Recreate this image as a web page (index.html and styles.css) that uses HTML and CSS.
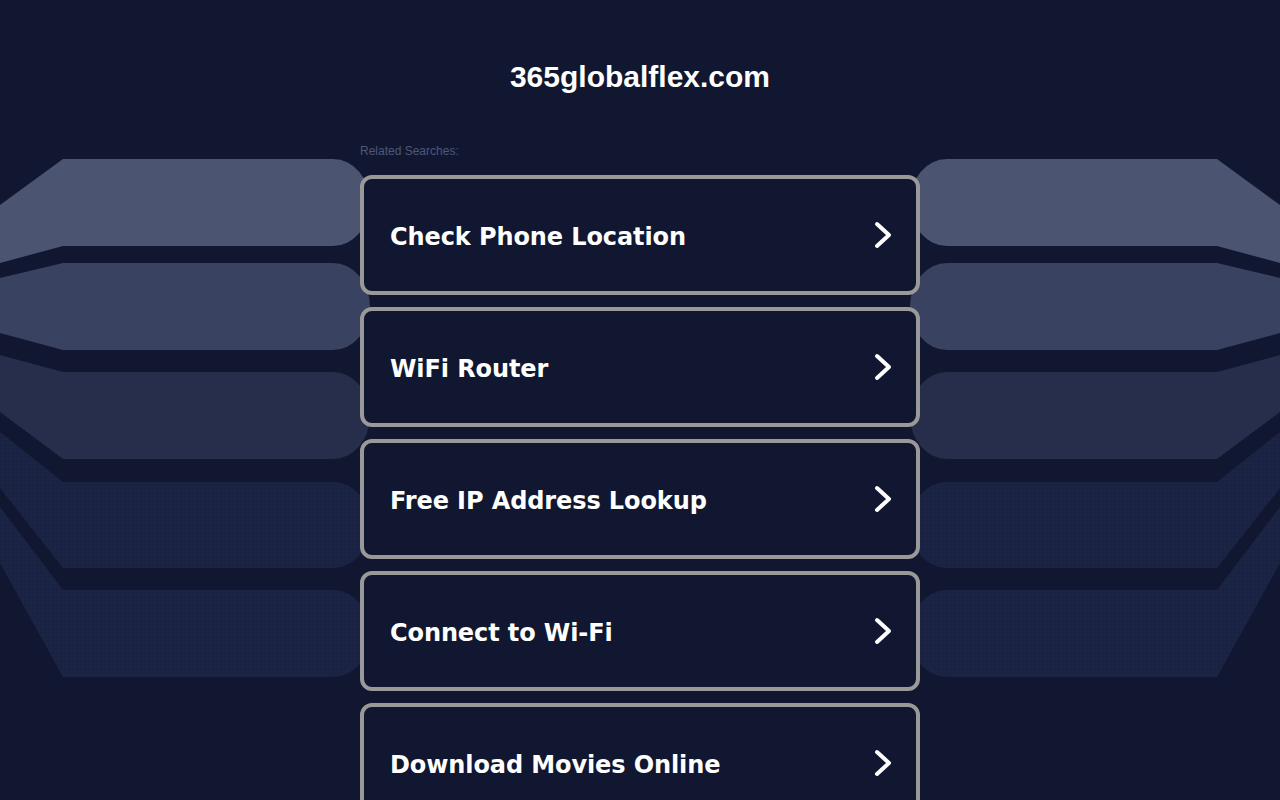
FILE: index.html
```html
<!DOCTYPE html>
<html lang="en">
<head>
<meta charset="utf-8">
<title>365globalflex.com</title>
<link rel="stylesheet" href="styles.css">
</head>
<body>
<svg class="bg-art" width="1280" height="800" viewBox="0 0 1280 800" aria-hidden="true">
  <defs>
    <pattern id="dots" width="4" height="4" patternUnits="userSpaceOnUse">
      <rect width="4" height="4" fill="#1b2344"/>
      <circle cx="1" cy="1" r="0.6" fill="#151c3a"/>
      <circle cx="3" cy="3" r="0.6" fill="#202a4d"/>
    </pattern>
    <g id="fan">
      <path fill="#4b5571" d="M0,205 L63,159 L333,159 A37,43.5 0 0 1 333,246 L63,246 L0,263 Z"/>
      <path fill="#3a4261" d="M0,278 L63,263 L333,263 A37,43.5 0 0 1 333,350 L63,350 L0,333 Z"/>
      <path fill="#262e4c" d="M0,355 L63,372 L333,372 A37,43.5 0 0 1 333,459 L63,459 L0,412 Z"/>
      <path fill="url(#dots)" d="M0,432 L63,482 L333,482 A37,43 0 0 1 333,568 L63,568 L0,488 Z"/>
      <path fill="url(#dots)" d="M0,507 L63,590 L333,590 A37,43.5 0 0 1 333,677 L63,677 L0,563 Z"/>
    </g>
  </defs>
  <use href="#fan"/>
  <use href="#fan" transform="translate(1280,0) scale(-1,1)"/>
</svg>
<main class="page">
  <h1 class="domain">365globalflex.com</h1>
  <p class="related-label">Related Searches:</p>
  <ul class="links">
    <li><a class="link-card" href="#"><span class="link-text">Check Phone Location</span><svg class="chev" width="20" height="28" viewBox="0 0 20 28"><polyline points="4,3 16,14 4,25"/></svg></a></li>
    <li><a class="link-card" href="#"><span class="link-text">WiFi Router</span><svg class="chev" width="20" height="28" viewBox="0 0 20 28"><polyline points="4,3 16,14 4,25"/></svg></a></li>
    <li><a class="link-card" href="#"><span class="link-text">Free IP Address Lookup</span><svg class="chev" width="20" height="28" viewBox="0 0 20 28"><polyline points="4,3 16,14 4,25"/></svg></a></li>
    <li><a class="link-card" href="#"><span class="link-text">Connect to Wi-Fi</span><svg class="chev" width="20" height="28" viewBox="0 0 20 28"><polyline points="4,3 16,14 4,25"/></svg></a></li>
    <li><a class="link-card" href="#"><span class="link-text">Download Movies Online</span><svg class="chev" width="20" height="28" viewBox="0 0 20 28"><polyline points="4,3 16,14 4,25"/></svg></a></li>
  </ul>
</main>
</body>
</html>
```
FILE: styles.css
```css
html, body {
  margin: 0;
  padding: 0;
  height: 100%;
  overflow: hidden;
}

body {
  background: #111730;
  font-family: "Liberation Sans", Arial, sans-serif;
  color: #ffffff;
}

.bg-art {
  position: absolute;
  top: 0;
  left: 0;
  z-index: 0;
}

.page {
  position: relative;
  z-index: 1;
  width: 560px;
  margin: 0 auto;
  padding-top: 60px;
}

.domain {
  margin: 0;
  font-family: "Liberation Sans", Arial, sans-serif;
  font-weight: bold;
  font-size: 30px;
  line-height: 34px;
  text-align: center;
  color: #ffffff;
}

.related-label {
  margin: 50px 0 0;
  font-size: 12px;
  line-height: 14px;
  color: #4e5878;
}

.links {
  list-style: none;
  margin: 17px 0 0;
  padding: 0;
  display: flex;
  flex-direction: column;
  gap: 12px;
}

.link-card {
  box-sizing: border-box;
  height: 120px;
  display: flex;
  align-items: center;
  justify-content: space-between;
  padding: 3px 23px 0 26px;
  background: #111730;
  border: 4px solid #999999;
  border-radius: 12px;
  text-decoration: none;
  color: #ffffff;
}

.link-text {
  font-family: "DejaVu Sans", Verdana, sans-serif;
  font-weight: bold;
  font-size: 24px;
  line-height: 28px;
  letter-spacing: -0.1px;
}

.chev {
  display: block;
  margin-top: -4px;
  fill: none;
  stroke: #ffffff;
  stroke-width: 4;
  stroke-linecap: round;
  stroke-linejoin: round;
}
```
